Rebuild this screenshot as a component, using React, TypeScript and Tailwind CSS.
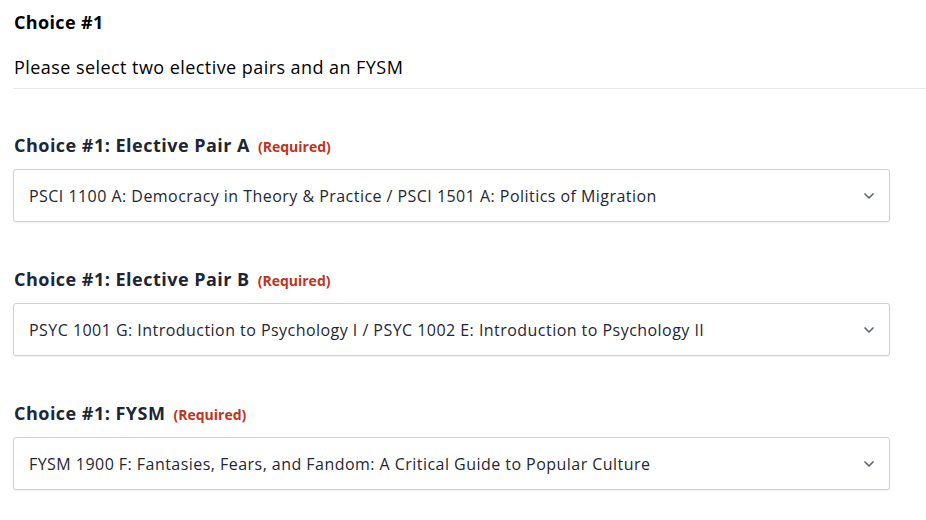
import { ChevronDown } from "lucide-react";

const groups = [
  {
    label: "Choice #1: Elective Pair A",
    value:
      "PSCI 1100 A: Democracy in Theory & Practice / PSCI 1501 A: Politics of Migration",
  },
  {
    label: "Choice #1: Elective Pair B",
    value:
      "PSYC 1001 G: Introduction to Psychology I / PSYC 1002 E: Introduction to Psychology II",
  },
  {
    label: "Choice #1: FYSM",
    value:
      "FYSM 1900 F: Fantasies, Fears, and Fandom: A Critical Guide to Popular Culture",
  },
];

export default function App() {
  return (
    <div className="min-h-screen bg-white font-['Open_Sans',sans-serif] text-black">
      <div className="pl-[13px]">
        <h2 className="pl-px pt-[10px] text-[18px] font-bold leading-6 tracking-[0.35px]">
          Choice #1
        </h2>
        <p className="mt-[21px] pl-px text-[18px] leading-6 tracking-[0.44px]">
          Please select two elective pairs and an FYSM
        </p>
        <div className="mt-[9px] border-b border-[#e8e8e8]" />

        <div className="flex w-[877px] flex-col gap-[45px] pt-[44px]">
          {groups.map((g) => (
            <div key={g.label}>
              <div className="flex items-baseline gap-2 pl-px">
                <span className="text-[18px] font-bold leading-6 tracking-[0.48px] text-[#1b2636]">
                  {g.label}
                </span>
                <span className="text-[14px] font-bold text-[#c1321b]">
                  (Required)
                </span>
              </div>
              <div className="mt-[12px] flex h-[53px] items-center justify-between rounded-[3px] border border-[#cfcfcf] bg-white pl-[15px] pr-[12px] shadow-[0_1px_2px_rgba(0,0,0,0.06)]">
                <span className="text-[16px] tracking-[0.46px] text-[#1e2733]">{g.value}</span>
                <ChevronDown className="h-4 w-4 text-[#5c6470]" strokeWidth={2.5} />
              </div>
            </div>
          ))}
        </div>
      </div>
    </div>
  );
}
